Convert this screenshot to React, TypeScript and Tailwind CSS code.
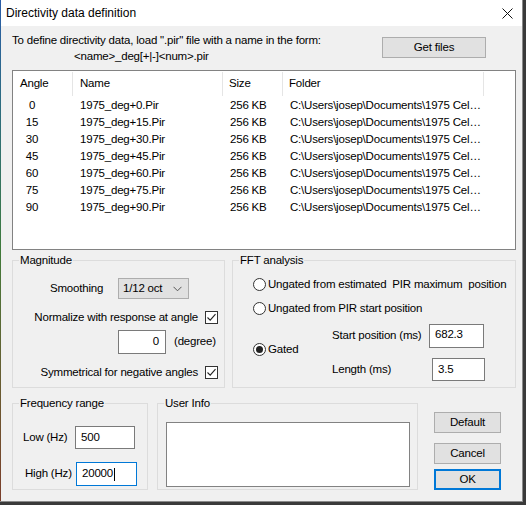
import React from 'react';

const rows = [0, 15, 30, 45, 60, 75, 90];

function CheckBox() {
  return (
    <div className="w-[13px] h-[13px] border border-[#333333] bg-white flex items-center justify-center shrink-0">
      <svg width="11" height="11" viewBox="0 0 11 11">
        <path d="M1.5 5.5 L4.2 8.2 L9.5 2.2" fill="none" stroke="#222" strokeWidth="1.1" />
      </svg>
    </div>
  );
}

function Radio({ checked = false }: { checked?: boolean }) {
  return (
    <div className="w-[13px] h-[13px] rounded-full border border-[#333333] bg-white flex items-center justify-center shrink-0">
      {checked && <div className="w-[7px] h-[7px] rounded-full bg-[#222]" />}
    </div>
  );
}

function GroupBox({ title, className, children }: { title: string; className: string; children?: React.ReactNode }) {
  return (
    <div className={`relative border border-[#dcdcdc] ${className}`}>
      <span className="absolute -top-[8px] left-[6px] bg-[#f0f0f0] px-[1px] leading-[14px] whitespace-nowrap">{title}</span>
      {children}
    </div>
  );
}

export default function App() {
  return (
    <div
      className="w-[526px] h-[505px] bg-[#3a3a3a] flex flex-col text-[12px] text-black"
      style={{ fontFamily: '"Liberation Sans", Arial, sans-serif' }}
    >
      <div className="w-[523px] h-[502px] flex border-r border-b border-[#8a8a8a]">
        {/* desktop showing through the thin left frame */}
        <div className="w-[1px] h-full bg-linear-to-b from-[#2b5ca8] via-[#3f7a3a] to-[#7a3d2a]" />
        <div className="flex-1 flex flex-col bg-[#f0f0f0]">
          {/* title bar */}
          <div className="h-[26px] bg-white flex items-center pl-[5px] pr-[5px]">
            <span className="flex-1">Directivity data definition</span>
            <svg width="11" height="11" viewBox="0 0 11 11" className="mr-[4px]">
              <path d="M0.5 0.5 L10.5 10.5 M10.5 0.5 L0.5 10.5" stroke="#111" strokeWidth="1" />
            </svg>
          </div>

          <div className="flex flex-col pl-[11px] text-[11.5px] tracking-[-0.2px] whitespace-nowrap">
            {/* instructions + get files */}
            <div className="flex h-[44px]">
              <div className="w-[370px] pt-[6px] leading-[16px]">
                <div>To define directivity data, load ".pir" file with a name in the form:</div>
                <div className="ml-[62px]">&lt;name&gt;_deg[+|-]&lt;num&gt;.pir</div>
              </div>
              <button className="mt-[11px] w-[104px] h-[21px] bg-[#e1e1e1] border border-[#adadad] flex items-center justify-center">
                Get files
              </button>
            </div>

            {/* file list */}
            <div className="w-[504px] h-[180px] bg-white border border-[#828282] flex flex-col pt-[1px]">
              <div className="flex h-[24px] items-center">
                <div className="w-[60px] pl-[7px] h-full flex items-center border-r border-[#e5e5e5]">Angle</div>
                <div className="w-[150px] pl-[7px] h-full flex items-center border-r border-[#e5e5e5]">Name</div>
                <div className="w-[60px] pl-[6px] h-full flex items-center border-r border-[#e5e5e5]">Size</div>
                <div className="w-[201px] pl-[6px] h-full flex items-center border-r border-[#e5e5e5]">Folder</div>
              </div>
              <div className="flex flex-col pt-[1px]">
                {rows.map((a) => (
                  <div key={a} className="flex h-[17px] items-center">
                    <div className="w-[38px] text-center">{a}</div>
                    <div className="w-[29px]" />
                    <div className="w-[150px]">1975_deg+{a}.Pir</div>
                    <div className="w-[60px]">256 KB</div>
                    <div className="w-[200px]">C:\Users\josep\Documents\1975 Cel…</div>
                  </div>
                ))}
              </div>
            </div>

            {/* magnitude + fft */}
            <div className="flex mt-[10px]">
              <GroupBox title="Magnitude" className="w-[213px] h-[128px] flex flex-col">
                <div className="flex items-center mt-[17px] h-[21px]">
                  <span className="ml-[37px] w-[68px]">Smoothing</span>
                  <div className="w-[71px] h-[21px] bg-[#e1e1e1] border border-[#adadad] flex items-center pl-[4px] pr-[6px]">
                    <span className="flex-1">1/12 oct</span>
                    <svg width="9" height="6" viewBox="0 0 9 6">
                      <path d="M0.5 0.8 L4.5 4.8 L8.5 0.8" fill="none" stroke="#555" strokeWidth="1" />
                    </svg>
                  </div>
                </div>
                <div className="flex items-center justify-end gap-[7px] pr-[6px] mt-[12px] h-[13px]">
                  <span>Normalize with response at angle</span>
                  <CheckBox />
                </div>
                <div className="flex items-center mt-[6px] h-[24px]">
                  <div className="ml-[105px] w-[48px] h-[24px] bg-white border border-[#7a7a7a] flex items-center justify-end pr-[6px]">
                    0
                  </div>
                  <span className="ml-[8px]">(degree)</span>
                </div>
                <div className="flex items-center justify-end gap-[7px] pr-[6px] mt-[12px] h-[13px]">
                  <span>Symmetrical for negative angles</span>
                  <CheckBox />
                </div>
              </GroupBox>

              <GroupBox title="FFT analysis" className="ml-[7px] w-[284px] h-[128px] flex flex-col">
                <div className="flex items-center gap-[2px] ml-[20px] mt-[17px] h-[13px]">
                  <Radio />
                  <span>Ungated from estimated&nbsp; PIR maximum&nbsp; position</span>
                </div>
                <div className="flex items-center gap-[2px] ml-[20px] mt-[11px] h-[13px]">
                  <Radio />
                  <span>Ungated from PIR start position</span>
                </div>
                <div className="flex mt-[9px] ml-[20px]">
                  <div className="w-[79px] flex items-center gap-[2px] mt-[19px] h-[13px]">
                    <Radio checked />
                    <span>Gated</span>
                  </div>
                  <div className="flex flex-col">
                    <div className="flex items-center h-[24px]">
                      <span className="w-[97px]">Start position (ms)</span>
                      <div className="w-[55px] h-[24px] bg-white border border-[#7a7a7a] flex items-center pl-[5px] pb-[2px]">682.3</div>
                    </div>
                    <div className="flex items-center h-[23px] mt-[10px]">
                      <span className="w-[100px]">Length (ms)</span>
                      <div className="w-[53px] h-[23px] bg-white border border-[#7a7a7a] flex items-center pl-[5px]">3.5</div>
                    </div>
                  </div>
                </div>
              </GroupBox>
            </div>

            {/* frequency range, user info, buttons */}
            <div className="flex mt-[15px]">
              <GroupBox title="Frequency range" className="w-[136px] h-[87px] flex flex-col">
                <div className="flex items-center mt-[22px] h-[23px]">
                  <span className="ml-[10px] w-[52px]">Low (Hz)</span>
                  <div className="w-[60px] h-[23px] bg-white border border-[#7a7a7a] flex items-center pl-[5px]">500</div>
                </div>
                <div className="flex items-center mt-[13px] h-[24px]">
                  <span className="ml-[12px] w-[51px]">High (Hz)</span>
                  <div className="w-[61px] h-[24px] bg-white border border-[#0078d7] flex items-center pl-[5px]">
                    20000
                    <span className="w-[1px] h-[13px] bg-black ml-[1px]" />
                  </div>
                </div>
              </GroupBox>

              <GroupBox title="User Info" className="ml-[9px] w-[261px] h-[87px] flex flex-col">
                <div className="ml-[8px] mt-[18px] w-[244px] h-[65px] bg-white border border-[#828282]" />
              </GroupBox>

              <div className="ml-[16px] flex flex-col w-[67px]">
                <button className="mt-[9px] h-[21px] bg-[#e1e1e1] border border-[#adadad] flex items-center justify-center">Default</button>
                <button className="mt-[10px] h-[21px] bg-[#e1e1e1] border border-[#adadad] flex items-center justify-center">Cancel</button>
                <button className="mt-[5px] h-[21px] bg-[#e1e1e1] border-2 border-[#0078d7] flex items-center justify-center">OK</button>
              </div>
            </div>
          </div>
        </div>
      </div>
    </div>
  );
}
